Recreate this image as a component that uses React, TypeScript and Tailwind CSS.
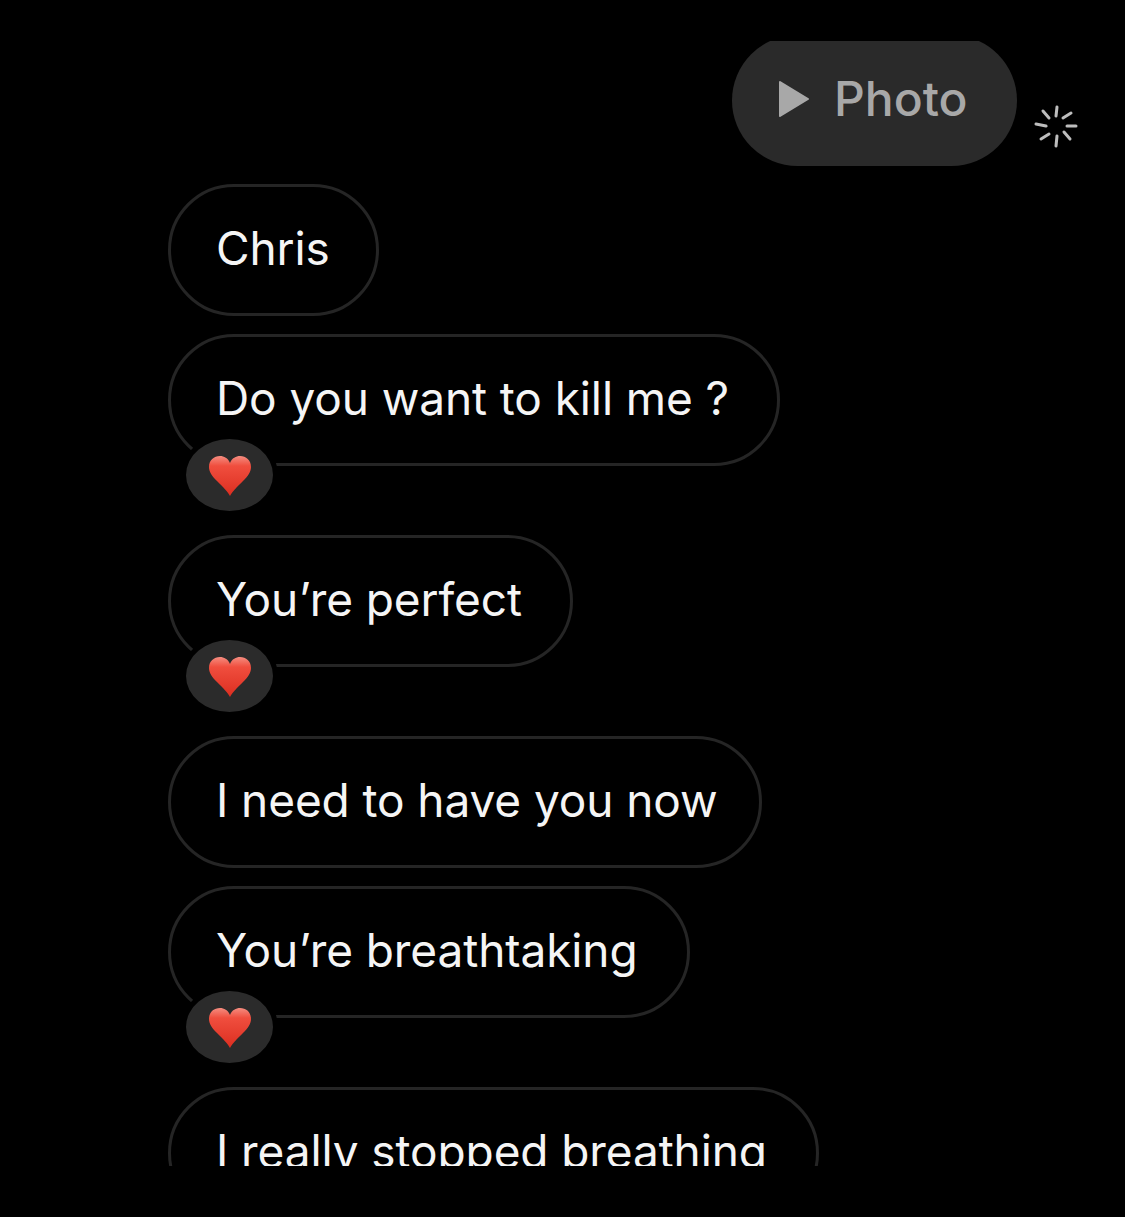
import React from "react";

const Heart = () => (
  <svg viewBox="0 0 44 42" className="w-[44px] h-[42px] mt-[2px]">
    <defs>
      <linearGradient id="heartFill" x1="0" y1="0" x2="0" y2="1">
        <stop offset="0" stopColor="#f58d80" />
        <stop offset="0.25" stopColor="#f04e3e" />
        <stop offset="1" stopColor="#dc2e20" />
      </linearGradient>
    </defs>
    <path
      d="M22 41C20 37 15 32 9 26C4 21 1 17 1 12C1 5 6 1 12 1C16 1 20 3 22 8C24 3 28 1 32 1C38 1 43 5 43 12C43 17 40 21 35 26C29 32 24 37 22 41Z"
      fill="url(#heartFill)"
    />
  </svg>
);

const Spinner = () => (
  <svg viewBox="0 0 44 44" className="w-[44px] h-[44px]" stroke="#bdbdbd" strokeWidth="3" strokeLinecap="round">
    <path d="M23 3L22 12" />
    <path d="M37 9L29 14" />
    <path d="M42 22L33 22" />
    <path d="M36 35L30 28" />
    <path d="M22 42L23 32" />
    <path d="M7 35L15 30" />
    <path d="M2 20L12 22" />
    <path d="M9 7L15 14" />
  </svg>
);

const Bubble = ({ text, width, liked }: { text: string; width: string; liked?: boolean }) => (
  <div className={liked ? "relative mb-[51px]" : "relative"}>
    <div className={`${width} h-[132px] shrink-0 rounded-[66px] border-[3px] border-[#252525] pl-[45px] pb-[3px] flex items-center`}>
      <span className="text-[46px] tracking-[-0.1px] text-[#f5f5f5] whitespace-nowrap">{text}</span>
    </div>
    {liked && (
      <div className="absolute left-[13px] top-[100px] w-[97px] h-[82px] rounded-[50%] bg-[#2b2b2b] border-[5px] border-black flex items-center justify-center">
        <Heart />
      </div>
    )}
  </div>
);

export default function App() {
  return (
    <div className="w-[1125px] h-[1217px] bg-black pt-[41px] font-['Inter','Liberation_Sans',sans-serif]">
      <div className="h-[1125px] overflow-hidden">
        <div className="flex justify-end items-end gap-[17px] pr-[47px] -mt-[6px]">
          <div className="w-[285px] h-[131px] rounded-[66px] bg-[#2a2a2a] pl-[46px] pb-[4px] flex items-center gap-[24px]">
            <svg viewBox="0 0 32 38" className="w-[32px] h-[38px]">
              <path d="M2 2L30 19L2 36Z" fill="#a8a8a8" stroke="#a8a8a8" strokeWidth="2" strokeLinejoin="round" />
            </svg>
            <span className="text-[48px] font-medium text-[#a8a8a8]">Photo</span>
          </div>
          <div className="mb-[18px]">
            <Spinner />
          </div>
        </div>
        <div className="ml-[168px] mt-[18px] flex flex-col gap-[18px]">
          <Bubble text="Chris" width="w-[211px]" />
          <Bubble text="Do you want to kill me ?" width="w-[612px]" liked />
          <Bubble text="You’re perfect" width="w-[405px]" liked />
          <Bubble text="I need to have you now" width="w-[594px]" />
          <Bubble text="You’re breathtaking" width="w-[522px]" liked />
          <Bubble text="I really stopped breathing" width="w-[651px]" />
        </div>
      </div>
    </div>
  );
}
